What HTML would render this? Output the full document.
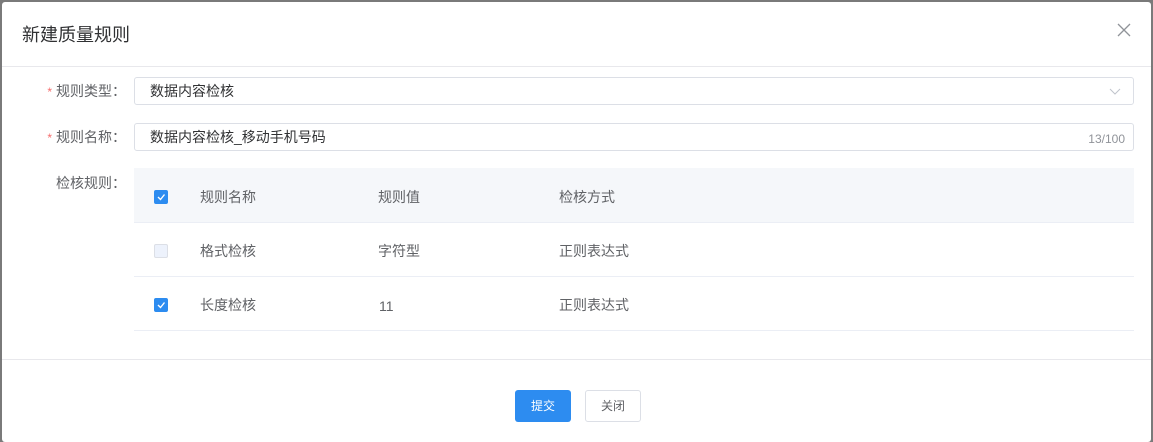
<!DOCTYPE html>
<html><head><meta charset="utf-8"><style>
*{box-sizing:border-box;margin:0;padding:0}
body{width:1153px;height:430px;background:#7a7a7a;font-family:"Liberation Sans","Noto Sans CJK SC",sans-serif;position:relative;overflow:hidden}
.m{position:absolute;left:2px;top:2px;width:1149px;height:440px;background:#fff;border-radius:3px}
.a{position:absolute}
.t{left:20px;top:19px;font-size:18px;color:#303133}
.hl{left:0;width:1149px;height:1px;background:#e8e8ec}
.lab{font-size:14px;color:#606266;text-align:right;width:124px;left:0;font-family:"Noto Sans CJK SC",sans-serif;line-height:20px}
.lab b{color:#f56c6c;font-weight:normal;margin-right:4px;font-size:12px;font-family:"Liberation Sans",sans-serif}
.in{left:132px;width:1000px;height:28px;border:1px solid #dcdfe6;border-radius:3px;font-size:14px;color:#303133;padding:3px 15px;line-height:20px}
.cb{width:14px;height:14px;border-radius:2px;background:#2d8cf0;border:1px solid #2d8cf0}
.cb.d{background:#edf2fc;border-color:#dcdfe6}
.cell{font-size:14px;color:#606266;line-height:20px}
.rl{left:132px;width:1000px;height:1px;background:#ebeef5}
</style></head><body>
<div class="m">
<div class="a t">新建质量规则</div>
<svg class="a" style="left:1115px;top:21px" width="14" height="14"><path d="M1 1L13 13M13 1L1 13" stroke="#909399" stroke-width="1.3"/></svg>
<div class="a hl" style="top:64px"></div>
<div class="a lab" style="top:79px"><b>*</b>规则类型：</div>
<div class="a in" style="top:75px">数据内容检核<svg class="a" style="right:12px;top:10px" width="12" height="8"><path d="M1 1L6 6L11 1" stroke="#c0c4cc" fill="none"/></svg></div>
<div class="a lab" style="top:125px"><b>*</b>规则名称：</div>
<div class="a in" style="top:121px">数据内容检核_移动手机号码<span class="a" style="right:8px;top:5px;font-size:12px;color:#909399">13/100</span></div>
<div class="a lab" style="top:171px">检核规则：</div>
<div class="a" style="left:132px;top:166px;width:1000px;height:54px;background:#f5f7fa"></div>
<div class="a rl" style="top:220px"></div>
<div class="a rl" style="top:274px"></div>
<div class="a rl" style="top:328px"></div>
<div class="a cb" style="left:152px;top:188px"><svg width="12" height="12" style="display:block"><path d="M3 6L5.5 8.5L9.5 3.5" stroke="#fff" stroke-width="1.4" fill="none"/></svg></div>
<div class="a cb d" style="left:152px;top:242px"></div>
<div class="a cb" style="left:152px;top:296px"><svg width="12" height="12" style="display:block"><path d="M3 6L5.5 8.5L9.5 3.5" stroke="#fff" stroke-width="1.4" fill="none"/></svg></div>
<div class="a cell" style="left:198px;top:185px">规则名称</div>
<div class="a cell" style="left:376px;top:185px">规则值</div>
<div class="a cell" style="left:557px;top:185px">检核方式</div>
<div class="a cell" style="left:198px;top:239px">格式检核</div>
<div class="a cell" style="left:376px;top:239px">字符型</div>
<div class="a cell" style="left:557px;top:239px">正则表达式</div>
<div class="a cell" style="left:198px;top:293px">长度检核</div>
<div class="a cell" style="left:377px;top:294px">11</div>
<div class="a cell" style="left:557px;top:293px">正则表达式</div>
<div class="a hl" style="top:357px"></div>
<div class="a" style="left:513px;top:388px;width:56px;height:32px;background:#2d8cf0;border-radius:3px;color:#fff;font-size:12px;text-align:center;line-height:32px">提交</div>
<div class="a" style="left:583px;top:388px;width:56px;height:32px;border:1px solid #dcdfe6;border-radius:3px;color:#606266;font-size:12px;text-align:center;line-height:30px">关闭</div>
</div>
</body></html>
